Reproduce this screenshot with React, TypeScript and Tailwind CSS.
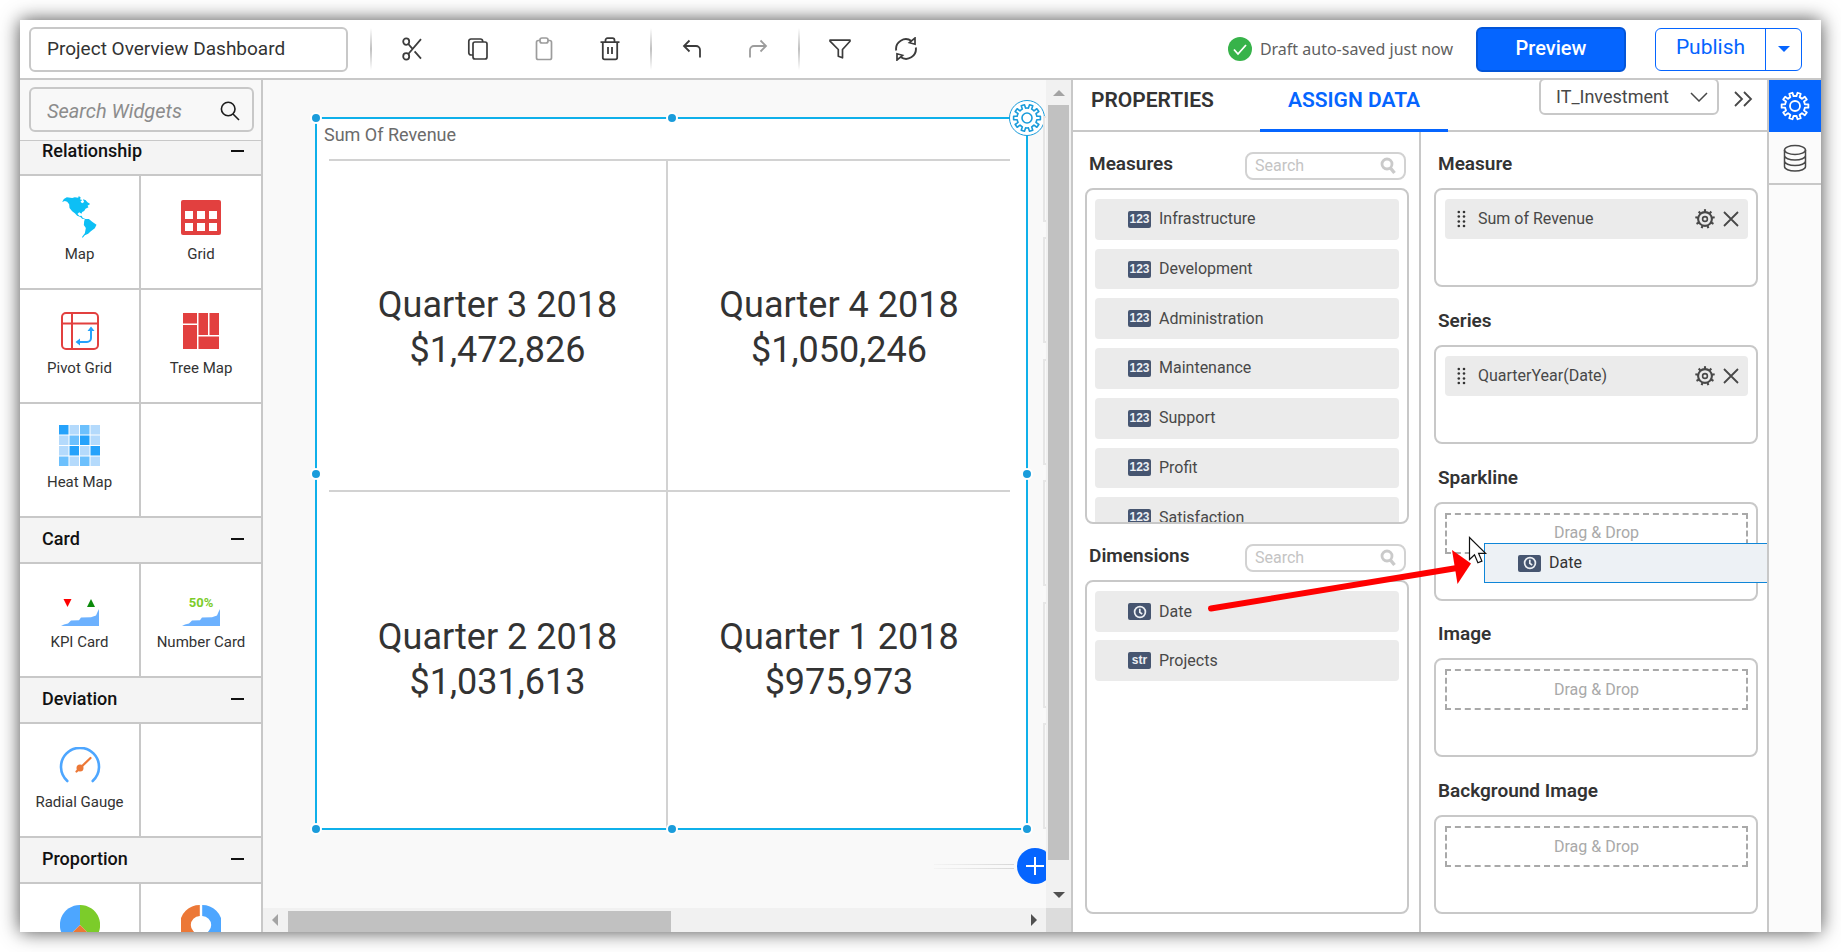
import type { ReactNode } from "react";

type IconProps = { className?: string };

function gearPath(c: number, outer: number, inner: number, teeth: number) {
  const step = (Math.PI * 2) / teeth;
  const pt = (r: number, a: number) =>
    `${(c + r * Math.sin(a)).toFixed(2)} ${(c - r * Math.cos(a)).toFixed(2)}`;
  let d = "";
  for (let i = 0; i < teeth; i++) {
    const a = i * step + step / 2;
    d += `${i === 0 ? "M" : "L"}${pt(inner, a - step * 0.27)}L${pt(outer, a - step * 0.2)}`;
    d += `L${pt(outer, a + step * 0.2)}L${pt(inner, a + step * 0.27)}`;
    d += `A${inner} ${inner} 0 0 1 ${pt(inner, a + step * 0.73)}`;
  }
  return d + "Z";
}

function GearOutline({ className }: IconProps) {
  return (
    <svg viewBox="0 0 30 30" className={className} fill="none" stroke="currentColor" strokeLinejoin="round" aria-hidden="true">
      <path d={gearPath(15, 13.5, 10, 10)} />
      <circle cx="15" cy="15" r="5" />
    </svg>
  );
}

function GearSmall({ className }: IconProps) {
  const spokes = Array.from({ length: 9 }, (_, i) => (i * 360) / 9);
  return (
    <svg viewBox="0 0 20 20" className={className} fill="none" stroke="currentColor" aria-hidden="true">
      <circle cx="10" cy="10" r="6.9" strokeWidth="2.1" />
      <circle cx="10" cy="10" r="2.4" strokeWidth="1.6" />
      {spokes.map((a) => (
        <path key={a} d="M10 3V.2" strokeWidth="2.1" transform={`rotate(${a} 10 10)`} />
      ))}
    </svg>
  );
}

function CutIcon() {
  return (
    <svg viewBox="0 0 20 24" className="h-6 w-5" fill="none" stroke="currentColor" strokeWidth="1.8" aria-hidden="true">
      <ellipse cx="4.2" cy="4.6" rx="3" ry="3.2" />
      <ellipse cx="4.2" cy="19.4" rx="3" ry="3.2" />
      <path d="M6.3 17 19 2.2M6.3 7l4 4.6M12.6 14.4 19 21.6" />
    </svg>
  );
}

function CopyIcon() {
  return (
    <svg viewBox="0 0 22 24" className="h-6 w-[22px]" fill="none" stroke="currentColor" strokeWidth="1.7" aria-hidden="true">
      <rect x="6" y="5" width="14" height="17" rx="2" />
      <path d="M6 18H4a2.2 2.2 0 0 1-2.2-2.2V4.2A2.2 2.2 0 0 1 4 2h9.5A2.2 2.2 0 0 1 15.7 4.200V5" />
    </svg>
  );
}

function PasteIcon() {
  return (
    <svg viewBox="0 0 20 24" className="h-6 w-5" fill="none" stroke="currentColor" strokeWidth="1.7" aria-hidden="true">
      <rect x="2.5" y="3.5" width="15" height="19" rx="1.8" />
      <rect x="6" y="1" width="8" height="5" rx="2" fill="white" />
    </svg>
  );
}

function TrashIcon() {
  return (
    <svg viewBox="0 0 20 24" className="h-6 w-5" fill="none" stroke="currentColor" strokeWidth="1.8" aria-hidden="true">
      <path d="M.5 5.2h19M5.5 5V3.2A2 2 0 0 1 7.5 1.200h5a2 2 0 0 1 2 2V5M2.8 5.2V20.5a1.8 1.8 0 0 0 1.8 1.8h10.8a1.8 1.8 0 0 0 1.8-1.8V5.2M8 10v7M12 10v7" />
    </svg>
  );
}

function UndoIcon() {
  return (
    <svg viewBox="0 0 20 20" className="h-5 w-5" fill="none" stroke="currentColor" strokeWidth="1.8" aria-hidden="true">
      <path d="M7.5 1.5 2 7l5.5 5.5M2 7h12a4 4 0 0 1 4 4v7.5" />
    </svg>
  );
}

function RedoIcon() {
  return (
    <svg viewBox="0 0 20 20" className="h-5 w-5" fill="none" stroke="currentColor" strokeWidth="1.8" aria-hidden="true">
      <path d="m12.5 1.5 5.5 5.5-5.5 5.5M18 7H6a4 4 0 0 0-4 4v7.5" />
    </svg>
  );
}

function FilterIcon() {
  return (
    <svg viewBox="0 0 22 20" className="h-5 w-[22px]" fill="none" stroke="currentColor" strokeWidth="1.7" strokeLinejoin="round" aria-hidden="true">
      <path d="M1 1.200h20v1l-7.500 8.300v8.300l-4.200-1.600v-6.700L1 2.200Z" />
    </svg>
  );
}

function RefreshIcon() {
  return (
    <svg viewBox="0 0 22 24" className="h-6 w-[22px]" fill="none" stroke="currentColor" strokeWidth="1.9" aria-hidden="true">
      <path d="M1.200 13.500A9.800 9.800 0 0 1 16.500 4M20.800 10.500A9.800 9.800 0 0 1 5.500 20" />
      <path d="M20 1v6.200l-5.600-1.500Z M2 23v-6.200l5.600 1.500Z" strokeWidth="1.700" />
    </svg>
  );
}

function SearchThin() {
  return (
    <svg viewBox="0 0 20 20" className="h-5 w-5 shrink-0" fill="none" stroke="currentColor" strokeWidth="1.6" aria-hidden="true">
      <circle cx="8.200" cy="8" r="6.800" />
      <path d="m13 13 6 6" />
    </svg>
  );
}

function SearchBold() {
  return (
    <svg viewBox="0 0 16 18" className="h-[18px] w-4 shrink-0" fill="none" stroke="currentColor" aria-hidden="true">
      <circle cx="7" cy="7" r="5" strokeWidth="2.800" />
      <path d="m10 10.500 4.500 5.500" strokeWidth="3.400" />
    </svg>
  );
}

function MapIcon() {
  return (
    <svg viewBox="0 0 104 126" className="h-[42px] w-[35px]" fill="#0dbff5" aria-hidden="true">
      <path d="M0 18 5 9 14 4 30 6 38 4 48 5 50 0 56 5 53 10 60 12 55 17 60 22 66 18 62 10 70 12 76 19 84 24 76 29 79 34 70 38 66 45 60 48 58 53 51 49 46 54 52 60 58 59 62 66 70 69 80 69 90 77 103 86 98 97 86 106 78 113 68 118 61 126 60 122 68 112 71 96 65 87 66 76 68 70 60 68 55 63 45 59 38 52 30 46 22 36 21 25 15 17 8 15Z" />
    </svg>
  );
}

function GridIcon() {
  return (
    <svg viewBox="0 0 40 35" className="h-[35px] w-10" aria-hidden="true">
      <rect width="40" height="35" rx="2" fill="#e2403f" />
      {[4, 16, 28].map((x) => (
        <g key={x} fill="white">
          <rect x={x} y="11" width="8" height="8" />
          <rect x={x} y="23" width="8" height="8" />
        </g>
      ))}
    </svg>
  );
}

function PivotIcon() {
  return (
    <svg viewBox="0 0 38 38" className="h-[38px] w-[38px]" fill="none" stroke="#e2403f" strokeWidth="2" aria-hidden="true">
      <rect x="1" y="1" width="36" height="36" rx="4" />
      <path d="M11 1v36M1 11.500h36" />
      <path d="M30 17v9a4 4 0 0 1-4 4h-8" stroke="#25a2fb" />
      <path d="m26.500 19 3.500-4.500 3.500 4.500ZM19 26.500 14.500 30l4.500 3.500Z" fill="#25a2fb" stroke="none" />
    </svg>
  );
}

function TreeMapIcon() {
  return (
    <svg viewBox="0 0 36 36" className="h-9 w-9" fill="#e2403f" aria-hidden="true">
      <path d="M0 0h14v10.500H0ZM0 12h14v24H0ZM15.500 0h9.500v22h-9.500ZM26.500 0H36v22h-9.500ZM15.500 23.500H36V36H15.500Z" />
    </svg>
  );
}

const heat = ["3121", "1231", "1313", "2121"];
const heatColor: Record<string, string> = { "1": "#b4dafc", "2": "#6cc0fd", "3": "#25a2fb" };

function HeatIcon() {
  return (
    <svg viewBox="0 0 82 82" className="h-[41px] w-[41px]" aria-hidden="true">
      {heat.flatMap((row, y) =>
        row.split("").map((v, x) => (
          <rect key={`${x}${y}`} x={x * 21} y={y * 21} width="19" height="19" fill={heatColor[v]} />
        )),
      )}
    </svg>
  );
}

const areaShape = "M0 17 3 15.500 7 14.500 10 11.500 18 11.200 20 8.500 30 8.200 35 6.500 36.500 3 38 0V17Z";

function KpiIcon() {
  return (
    <svg viewBox="0 0 38 28" className="mt-[14px] h-7 w-[38px]" aria-hidden="true">
      <path d="M2.500 1h8l-4 8Z" fill="#fe0000" />
      <path d="M26 9h8l-4-8Z" fill="#0b8a0b" />
      <path d={areaShape} transform="translate(0 11)" fill="#6cb1fe" />
    </svg>
  );
}

function NumberIcon() {
  return (
    <span className="mt-3 flex flex-col items-center">
      <span className="text-[13px] leading-[13px] font-bold text-[#7ccc2a]">50%</span>
      <svg viewBox="0 0 38 17" className="h-[17px] w-[38px]" aria-hidden="true">
        <path d={areaShape} fill="#6cb1fe" />
      </svg>
    </span>
  );
}

function RadialIcon() {
  return (
    <svg viewBox="0 0 42 36" className="h-9 w-[42px]" fill="none" strokeLinecap="round" aria-hidden="true">
      <path d="M8.300 34A19 19 0 1 1 33.700 34" stroke="#4da6ff" strokeWidth="2.600" />
      <path d="m17.500 24.500 14-13.500" stroke="#ec7837" strokeWidth="2.200" />
      <circle cx="21" cy="21" r="3.500" fill="#ec7837" />
    </svg>
  );
}

function PieIcon() {
  return (
    <svg viewBox="0 0 40 40" className="h-10 w-10" aria-hidden="true">
      <path d="M20 20V0A20 20 0 0 1 34.200 34.200Z" fill="#7ccc2a" />
      <path d="M20 20V0A20 20 0 0 0 5.800 34.200Z" fill="#4da6ff" />
      <path d="M20 20 5.800 34.200A20 20 0 0 0 34.200 34.200Z" fill="#ec7837" />
    </svg>
  );
}

function DonutIcon() {
  return (
    <svg viewBox="0 0 40 40" className="h-10 w-10" fill="none" strokeWidth="11" aria-hidden="true">
      <path d="M21.200 5.500a14.500 14.500 0 0 1 0 29" stroke="#4da6ff" />
      <path d="M18.800 5.500a14.500 14.500 0 0 0 0 29" stroke="#ec7837" />
    </svg>
  );
}

type Widget = { name?: string; hint?: string; icon: ReactNode };

const groups: { title: string; widgets: Widget[] }[] = [
  {
    title: "Relationship",
    widgets: [
      { name: "Map", icon: <MapIcon /> },
      { name: "Grid", icon: <GridIcon /> },
      { name: "Pivot Grid", icon: <PivotIcon /> },
      { name: "Tree Map", icon: <TreeMapIcon /> },
      { name: "Heat Map", icon: <HeatIcon /> },
    ],
  },
  {
    title: "Card",
    widgets: [
      { name: "KPI Card", icon: <KpiIcon /> },
      { name: "Number Card", icon: <NumberIcon /> },
    ],
  },
  { title: "Deviation", widgets: [{ name: "Radial Gauge", icon: <RadialIcon /> }] },
  {
    title: "Proportion",
    widgets: [
      { hint: "Pie", icon: <PieIcon /> },
      { hint: "Doughnut", icon: <DonutIcon /> },
    ],
  },
];

function ToolButton({ label, muted, children }: { label: string; muted?: boolean; children: ReactNode }) {
  return (
    <button
      type="button"
      aria-label={label}
      className={`flex h-10 w-[66px] items-center justify-center ${muted ? "text-[#9c9c9c]" : "text-[#3c3c3c]"}`}
    >
      {children}
    </button>
  );
}

function Separator() {
  return <span className="mx-[7px] h-[42px] w-[2px] bg-linear-to-b from-white via-[#c0c0c0] to-white" />;
}

function Header() {
  return (
    <header className="flex h-[60px] shrink-0 items-center border-b-2 border-[#c8c8c8] bg-white pr-[19px] pl-[9px]">
      <input
        type="text"
        aria-label="Dashboard name"
        defaultValue="Project Overview Dashboard"
        className="h-[45px] w-[319px] rounded-md border-2 border-[#c8c8c8] px-4 pb-[2px] text-[19px] text-[#333]"
      />
      <div className="ml-[15px] flex items-center">
        <Separator />
        <ToolButton label="Cut"><CutIcon /></ToolButton>
        <ToolButton label="Copy"><CopyIcon /></ToolButton>
        <ToolButton label="Paste" muted><PasteIcon /></ToolButton>
        <ToolButton label="Delete"><TrashIcon /></ToolButton>
        <Separator />
        <ToolButton label="Undo"><UndoIcon /></ToolButton>
        <ToolButton label="Redo" muted><RedoIcon /></ToolButton>
        <Separator />
        <ToolButton label="Filter"><FilterIcon /></ToolButton>
        <ToolButton label="Refresh"><RefreshIcon /></ToolButton>
      </div>
      <div className="ml-auto flex items-center">
        <svg viewBox="0 0 24 24" className="h-6 w-6" aria-hidden="true">
          <circle cx="12" cy="12" r="12" fill="#37b34a" />
          <path d="m6 12.500 4 4.500 8-9" fill="none" stroke="white" strokeWidth="1.800" />
        </svg>
        <p className="ml-2 font-['Noto_Sans','Open_Sans',sans-serif] text-base text-[#606060]">Draft auto-saved just now</p>
        <button type="button" className="ml-[23px] h-[45px] w-[150px] rounded-md border-2 border-[#0355d8] bg-[#0565ff] pb-[2px] text-[20px] font-medium text-white">
          Preview
        </button>
        <div className="ml-[29px] flex h-[43px] w-[147px] rounded-md border border-[#0565ff] text-[#0565ff]">
          <button type="button" className="flex-1 pb-[2px] text-[21px]">Publish</button>
          <button type="button" aria-label="Publish options" className="flex w-9 items-center justify-center border-l border-[#0565ff]">
            <svg viewBox="0 0 12 6" className="h-[6px] w-3" fill="currentColor" aria-hidden="true"><path d="M0 0h12L6 6Z" /></svg>
          </button>
        </div>
      </div>
    </header>
  );
}

function Sidebar() {
  return (
    <aside className="flex w-[243px] shrink-0 flex-col border-r-2 border-[#c8c8c8] bg-white">
      <div className="shrink-0 border-b border-[#c8c8c8] bg-[#f8f8f8] pt-[7px] pr-[7px] pb-2 pl-[9px]">
        <label className="flex h-[45px] items-center rounded-md border-2 border-[#c8c8c8] pt-[2px] pr-3 pl-4 text-[#1c1c1c]">
          <input type="search" aria-label="Search widgets" placeholder="Search Widgets" className="w-full min-w-0 bg-transparent text-[20px] italic placeholder:text-[#8c8c8c]" />
          <SearchThin />
        </label>
      </div>
      <div className="min-h-0 flex-1 overflow-hidden">
        <div className="-mt-[11px]">
          {groups.map((g) => (
            <section key={g.title}>
              <h2 className="flex h-[46px] items-center justify-between border-b-2 border-[#c8c8c8] bg-[#f4f4f4] pr-[17px] pb-[2px] pl-[22px] text-[18px] leading-5 font-medium text-[#111]">
                {g.title}
                <button type="button" aria-label={`Collapse ${g.title}`} className="flex h-5 w-[13px] items-center">
                  <span className="h-[2px] w-full bg-[#111]" />
                </button>
              </h2>
              <div className="grid grid-cols-[119fr_120fr] gap-[2px] border-b-2 border-[#c8c8c8] bg-[#c8c8c8]">
                {g.widgets.map((w) => (
                  <button key={w.name ?? w.hint} type="button" aria-label={w.hint} className="flex h-28 flex-col items-center bg-white pt-5 text-[15px] text-[#333]">
                    <span className="flex h-[42px] items-center">{w.icon}</span>
                    {w.name && <span className="mt-[6px] leading-5">{w.name}</span>}
                  </button>
                ))}
                {g.widgets.length % 2 === 1 && <span className="bg-white" />}
              </div>
            </section>
          ))}
        </div>
      </div>
    </aside>
  );
}

const cards = [
  ["Quarter 3 2018", "$1,472,826"],
  ["Quarter 4 2018", "$1,050,246"],
  ["Quarter 2 2018", "$1,031,613"],
  ["Quarter 1 2018", "$975,973"],
];

const handles = [
  "top-0 left-0",
  "top-0 left-1/2",
  "top-1/2 left-0",
  "top-1/2 left-full",
  "top-full left-0",
  "top-full left-1/2",
  "top-full left-full",
];

function Canvas() {
  return (
    <main className="grid min-w-0 flex-1 grid-cols-[1fr_25px] grid-rows-[1fr_24px] bg-[#f9f9f9]">
      <div className="relative flex min-h-0 min-w-0 flex-col overflow-hidden pt-[37px] pr-[18px] pb-[78px] pl-[52px]">
        <section className="relative flex flex-1 flex-col border-2 border-[#0fb0ea] bg-white">
          <h3 className="flex h-10 shrink-0 items-center pb-[10px] pl-[7px] text-[18px] text-[#6b6b6b]">Sum Of Revenue</h3>
          <div className="mr-4 ml-3 grid flex-1 grid-cols-[339fr_342fr] grid-rows-[331fr_336fr] border-t-2 border-[#d2d2d2]">
            {cards.map(([name, value], i) => (
              <div
                key={name}
                className={`flex flex-col items-center justify-center border-[#d2d2d2] text-[36px] leading-[45px] text-[#333] ${i % 2 === 0 ? "border-r-2" : ""} ${i < 2 ? "border-b-2 pt-1" : ""}`}
              >
                <span>{name}</span>
                <span>{value}</span>
              </div>
            ))}
          </div>
          <div className="pointer-events-none absolute -inset-px">
            {handles.map((pos) => (
              <span key={pos} className={`absolute h-3 w-3 -translate-x-1/2 -translate-y-1/2 rounded-full border-2 border-white bg-[#1a9cdb] ${pos}`} />
            ))}
            <button
              type="button"
              aria-label="Widget settings"
              className="pointer-events-auto absolute top-0 left-full flex h-9 w-9 -translate-x-1/2 -translate-y-1/2 items-center justify-center rounded-full border border-[#1a9cdb] bg-white text-[#1a9cdb]"
            >
              <GearOutline className="h-[30px] w-[30px] shrink-0 stroke-[1.6]" />
            </button>
          </div>
        </section>
        <div className="absolute top-9 right-0 bottom-[79px] flex w-[3px] flex-col justify-between">
          {[0, 1, 2, 3, 4, 5].map((n) => (
            <span key={n} className="h-[106px] border-y-2 border-l-2 border-[#e6e6e6]" />
          ))}
        </div>
        <div className="absolute right-[-7px] bottom-6 flex items-center">
          <span className="mr-[3px] flex flex-col gap-[3px]">
            <span className="h-px w-20 bg-linear-to-r from-[#f4f4f4] to-[#d8d8d8]" />
            <span className="h-px w-20 bg-linear-to-r from-[#f4f4f4] to-[#d8d8d8]" />
          </span>
          <button type="button" aria-label="Add widget" className="flex h-9 w-9 items-center justify-center rounded-full bg-[#0565ff] text-white">
            <svg viewBox="0 0 18 18" className="h-[18px] w-[18px]" stroke="currentColor" strokeWidth="2" aria-hidden="true">
              <path d="M9 0v18M0 9h18" />
            </svg>
          </button>
        </div>
      </div>
      <div className="flex flex-col items-center bg-[#f1f1f1] pt-[10px] pb-[10px]">
        <svg viewBox="0 0 12 6" className="h-[6px] w-3 shrink-0" fill="#a3a3a3" aria-hidden="true"><path d="M0 6h12L6 0Z" /></svg>
        <span className="mt-[9px] mb-8 w-[21px] flex-1 bg-[#c1c1c1]" />
        <svg viewBox="0 0 12 6" className="h-[6px] w-3 shrink-0" fill="#505050" aria-hidden="true"><path d="M0 0h12L6 6Z" /></svg>
      </div>
      <div className="flex items-center bg-[#f1f1f1] px-[9px]">
        <svg viewBox="0 0 6 12" className="h-3 w-[6px] shrink-0" fill="#a3a3a3" aria-hidden="true"><path d="M6 0v12L0 6Z" /></svg>
        <span className="mt-[2px] ml-[10px] h-[21px] w-1/2 bg-[#c1c1c1]" />
        <svg viewBox="0 0 6 12" className="ml-auto h-3 w-[6px] shrink-0" fill="#505050" aria-hidden="true"><path d="M0 0v12l6-6Z" /></svg>
      </div>
      <div className="bg-[#dcdcdc]" />
    </main>
  );
}

function Badge({ kind }: { kind: string }) {
  return (
    <span className="flex h-[17px] w-[23px] shrink-0 items-center justify-center rounded-xs bg-[#465570] font-['Liberation_Sans',sans-serif] text-[12px] leading-[17px] font-bold text-[#eceff3]">
      {kind === "date" ? (
        <svg viewBox="0 0 14 14" className="h-[14px] w-[14px]" fill="none" stroke="currentColor" strokeWidth="1.700" aria-hidden="true">
          <circle cx="7" cy="7" r="5.400" />
          <path d="M6.800 3.800v3.600l2.400 1.600" />
        </svg>
      ) : (
        kind
      )}
    </span>
  );
}

function Field({ name, kind }: { name: string; kind: string }) {
  return (
    <li className="flex items-center gap-2 rounded-sm bg-[#ebebeb] pl-[33px] text-base text-[#484848]">
      <Badge kind={kind} />
      {name}
    </li>
  );
}

function ColumnHead({ title }: { title: string }) {
  return (
    <div className="flex h-14 shrink-0 items-end justify-between pr-[3px] pb-2 pl-1">
      <h2 className="text-[19px] leading-8 font-semibold text-[#333]">{title}</h2>
      <label className="flex h-7 w-[161px] items-center rounded-lg border-2 border-[#d2d2d2] pr-2 pl-2 text-[#cacaca]">
        <input type="search" aria-label={`Search ${title}`} placeholder="Search" className="w-full min-w-0 bg-transparent text-base placeholder:text-[#c4c4c4]" />
        <SearchBold />
      </label>
    </div>
  );
}

const measures = ["Infrastructure", "Development", "Administration", "Maintenance", "Support", "Profit", "Satisfaction"];

function DropSection({ title, value }: { title: string; value?: string }) {
  return (
    <section className="shrink-0">
      <h2 className="flex h-14 items-end pb-2 pl-1 text-[19px] leading-8 font-semibold text-[#333]">{title}</h2>
      <div className="h-[99px] rounded-lg border-2 border-[#c8c8c8] pt-[9px] pr-2 pl-[9px]">
        {value ? (
          <div className="flex h-10 items-center rounded-sm bg-[#ebebeb] pr-[9px] pl-3 text-base text-[#484848]">
            <svg viewBox="0 0 9 18" className="h-[18px] w-[9px]" fill="#333" aria-hidden="true">
              {[2, 6.5, 11.5, 16].map((y) => (
                <g key={y}>
                  <circle cx="1.800" cy={y} r="1.300" />
                  <circle cx="7" cy={y} r="1.300" />
                </g>
              ))}
            </svg>
            <span className="ml-3">{value}</span>
            <button type="button" aria-label={`${value} settings`} className="ml-auto">
              <GearSmall className="h-5 w-5" />
            </button>
            <button type="button" aria-label={`Remove ${value}`} className="ml-2">
              <svg viewBox="0 0 16 16" className="h-4 w-4" stroke="currentColor" strokeWidth="1.800" aria-hidden="true">
                <path d="m1 1 14 14M15 1 1 15" />
              </svg>
            </button>
          </div>
        ) : (
          <div className="flex h-[41px] items-center justify-center border-2 border-dashed border-[#a9a9a9] text-base text-[#a9a9a9]">
            Drag &amp; Drop
          </div>
        )}
      </div>
    </section>
  );
}

function DataPanel() {
  return (
    <div className="flex w-[698px] shrink-0 flex-col border-x-2 border-[#c8c8c8] bg-white">
      <div className="flex h-[52px] shrink-0 border-b-2 border-[#c8c8c8]" role="tablist">
        <button type="button" role="tab" aria-selected="false" className="w-[187px] pb-2 pl-[18px] text-left text-[21px] font-semibold text-[#333]">
          PROPERTIES
        </button>
        <button type="button" role="tab" aria-selected="true" className="-mb-[2px] w-[188px] border-b-3 border-[#0565ff] pb-[7px] text-[21px] font-semibold text-[#0565ff]">
          ASSIGN DATA
        </button>
        <div className="ml-auto flex items-start">
          <div className="relative -mt-[2px]">
            <select aria-label="Data source" className="h-[37px] w-[180px] appearance-none rounded-md border-2 border-[#c8c8c8] bg-white pl-[15px] text-[18px] text-[#484848]">
              <option>IT_Investment</option>
            </select>
            <svg viewBox="0 0 18 10" className="pointer-events-none absolute top-[14px] right-[11px] h-[10px] w-[18px]" fill="none" stroke="#484848" strokeWidth="1.500" aria-hidden="true">
              <path d="m1 1 8 8 8-8" />
            </svg>
          </div>
          <button type="button" aria-label="Collapse panel" className="mt-[11px] mr-[14px] ml-[14px] text-[#484848]">
            <svg viewBox="0 0 20 16" className="h-4 w-5" fill="none" stroke="currentColor" strokeWidth="1.800" aria-hidden="true">
              <path d="m2 1 7 7-7 7M11 1l7 7-7 7" />
            </svg>
          </button>
        </div>
      </div>
      <div className="relative flex min-h-0 flex-1 overflow-hidden">
        <div className="flex flex-1 flex-col border-r-2 border-[#c8c8c8] pr-[10px] pb-[18px] pl-3">
          <ColumnHead title="Measures" />
          <div className="h-[336px] shrink-0 overflow-hidden rounded-lg border-2 border-[#c8c8c8] px-2 pt-[9px]">
            <ul className="grid h-[339px] auto-rows-fr gap-[9px]">
              {measures.map((m) => (
                <Field key={m} name={m} kind="123" />
              ))}
            </ul>
          </div>
          <ColumnHead title="Dimensions" />
          <div className="min-h-0 flex-1 rounded-lg border-2 border-[#c8c8c8] px-2 pt-[9px]">
            <ul className="grid auto-rows-[41px] gap-2">
              <Field name="Date" kind="date" />
              <Field name="Projects" kind="str" />
            </ul>
          </div>
        </div>
        <div className="flex w-[346px] flex-col justify-between pr-[9px] pb-[18px] pl-[13px]">
          <DropSection title="Measure" value="Sum of Revenue" />
          <DropSection title="Series" value="QuarterYear(Date)" />
          <DropSection title="Sparkline" />
          <DropSection title="Image" />
          <DropSection title="Background Image" />
        </div>
        <div className="absolute top-[411px] right-0 flex h-10 w-[283px] items-center gap-2 border border-r-0 border-[#0f86d8] bg-[#edf1f5] pl-[33px] text-base text-[#333]">
          <Badge kind="date" />
          Date
        </div>
        <svg viewBox="0 0 270 70" className="pointer-events-none absolute top-[414px] right-[292px] h-[70px] w-[270px]" aria-hidden="true">
          <path d="M6 62.500 252 22" stroke="#fe0000" strokeWidth="6" strokeLinecap="round" />
          <path d="M247 4 266 17.500 252.500 38Z" fill="#fe0000" />
        </svg>
        <svg viewBox="0 0 20 30" className="pointer-events-none absolute top-[404px] right-[279px] h-[30px] w-5" aria-hidden="true">
          <path d="M1.500 1.500v22l5-4.700 3.400 8 4-1.700-3.300-7.800h7Z" fill="white" stroke="#111" strokeWidth="1.200" />
        </svg>
      </div>
    </div>
  );
}

function Rail() {
  return (
    <nav className="flex w-[52px] shrink-0 flex-col bg-[#fbfbfb]" aria-label="Panels">
      <button type="button" aria-label="Widget panel" className="flex h-[52px] items-center justify-center bg-[#0565ff] text-white">
        <GearOutline className="h-[30px] w-[30px] stroke-[1.8]" />
      </button>
      <button type="button" aria-label="Data sources" className="flex h-[53px] items-center justify-center border-b-2 border-[#c8c8c8] text-[#484848]">
        <svg viewBox="0 0 24 28" className="h-7 w-6" fill="none" stroke="currentColor" strokeWidth="1.500" aria-hidden="true">
          <ellipse cx="12" cy="6" rx="10.500" ry="4.500" />
          <path d="M1.500 6v16.500c0 2.500 4.700 4.500 10.500 4.500s10.500-2 10.500-4.500V6M1.500 11.500C1.500 14 6.200 16 12 16s10.500-2 10.500-4.500M1.500 17C1.500 19.500 6.200 21.500 12 21.500s10.500-2 10.500-4.500" />
        </svg>
      </button>
    </nav>
  );
}

export default function App() {
  return (
    <div className="flex h-screen bg-white p-5 font-['Roboto',sans-serif]">
      <div className="flex min-w-0 flex-1 flex-col overflow-hidden bg-white shadow-[0_0_18px_rgba(0,0,0,0.7)]">
        <Header />
        <div className="flex min-h-0 flex-1">
          <Sidebar />
          <Canvas />
          <DataPanel />
          <Rail />
        </div>
      </div>
    </div>
  );
}
